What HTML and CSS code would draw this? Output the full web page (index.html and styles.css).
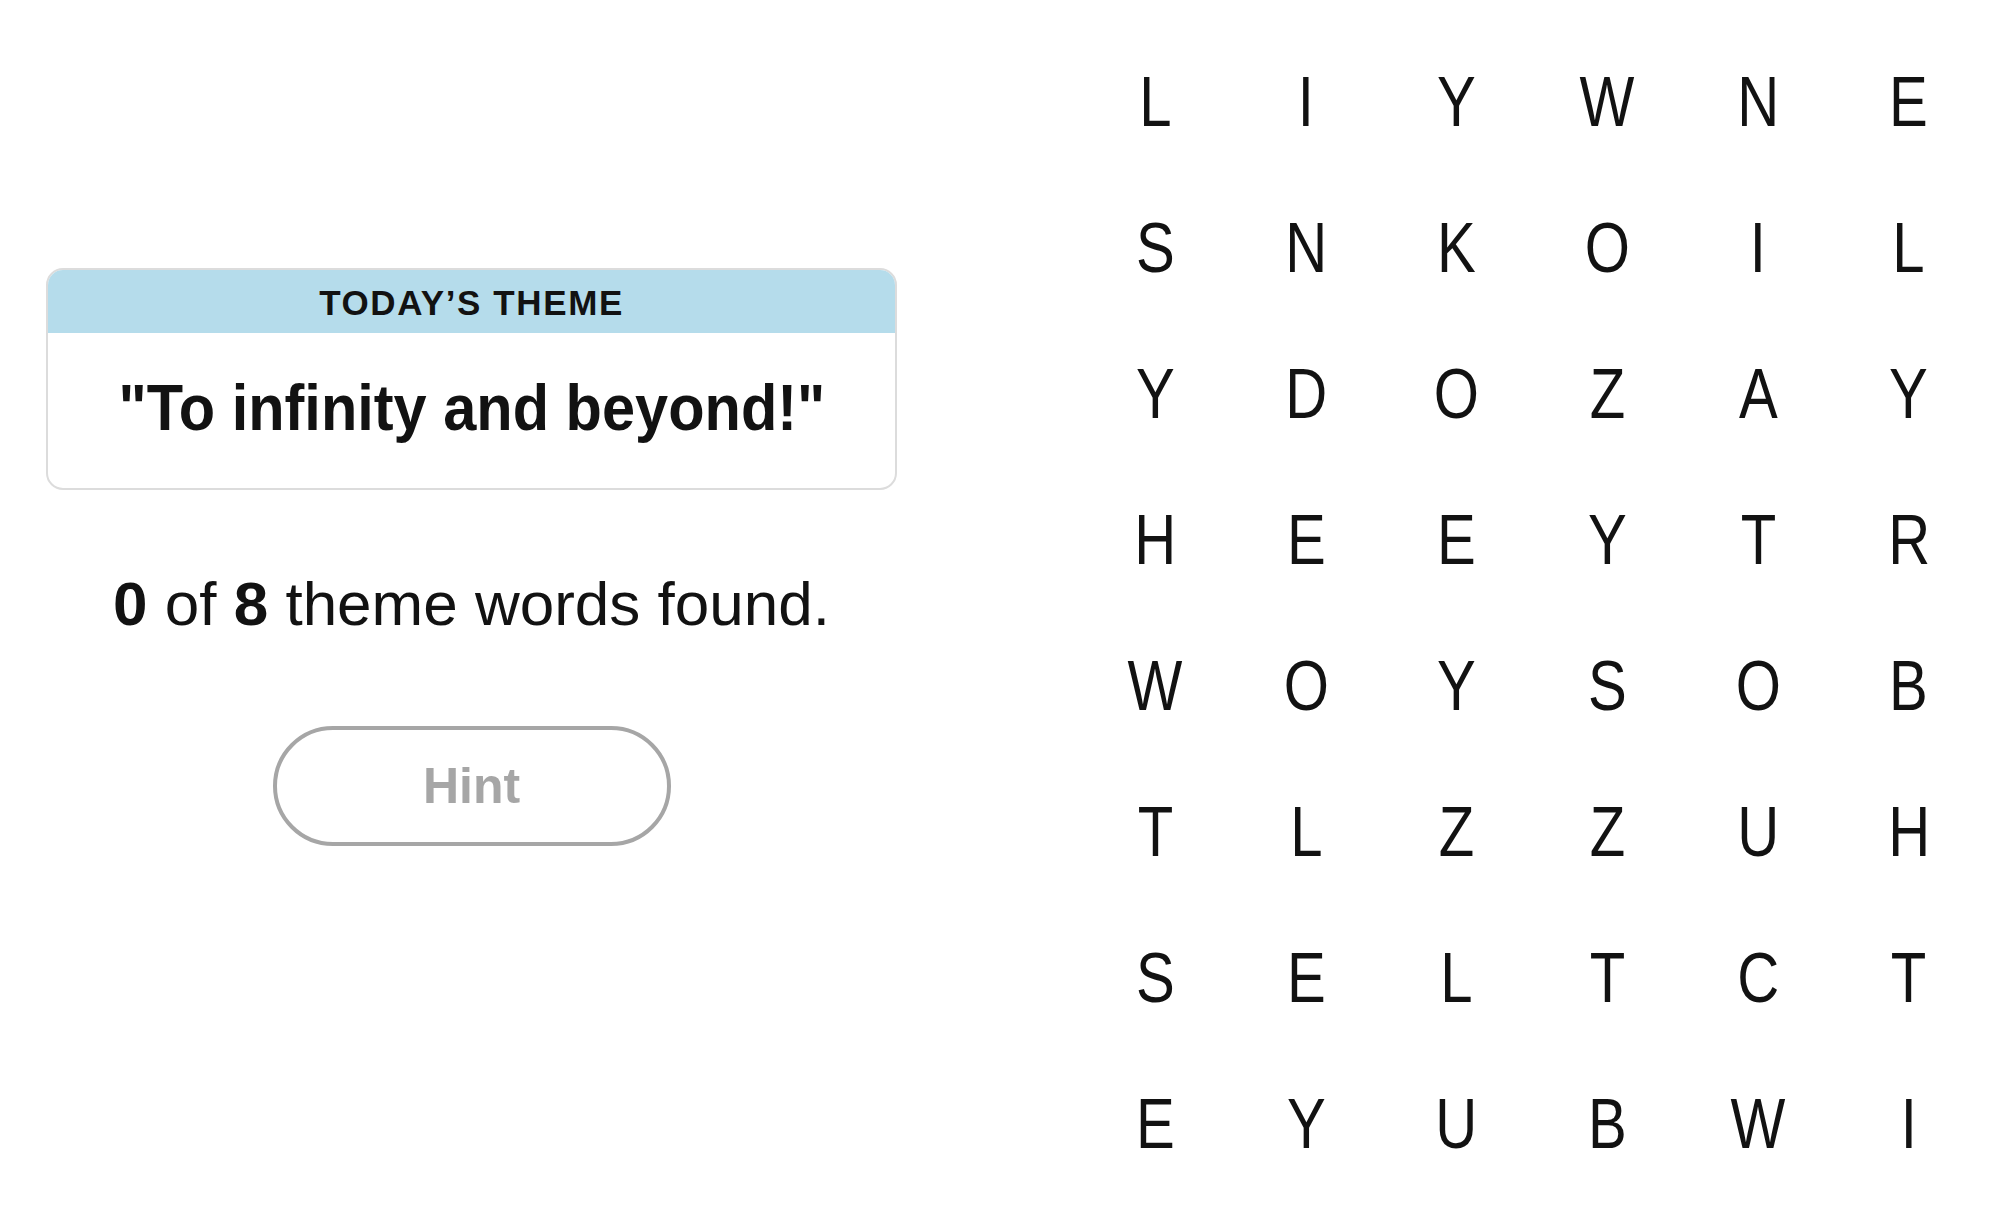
FILE: index.html
```html
<!DOCTYPE html>
<html lang="en">
<head>
    <meta charset="UTF-8">
    <title>Strands</title>
    <link rel="stylesheet" href="styles.css">
</head>
<body>
    <main class="game">
        <section class="sidebar">
            <div class="theme-card">
                <h2 class="theme-label">TODAY’S THEME</h2>
                <p class="theme-clue"><span>"To infinity and beyond!"</span></p>
            </div>

            <p class="progress"><b>0</b> of <b>8</b> theme words found.</p>

            <button class="hint-button" disabled>Hint</button>
        </section>

        <section class="board" id="board"></section>
    </main>

    <script>
        // Letras do tabuleiro, linha por linha
        const rows = [
            'LIYWNE',
            'SNKOIL',
            'YDOZAY',
            'HEEYTR',
            'WOYSOB',
            'TLZZUH',
            'SELTCT',
            'EYUBWI'
        ];

        const board = document.getElementById('board');
        rows.forEach(row => {
            row.split('').forEach(letter => {
                const cell = document.createElement('button');
                cell.className = 'letter';
                const span = document.createElement('span');
                span.textContent = letter;
                cell.appendChild(span);
                board.appendChild(cell);
            });
        });
    </script>
</body>
</html>
```

FILE: styles.css
```css
body {
    font-family: "Liberation Sans", Arial, sans-serif;
    background: #fff;
    color: #121212;
    margin: 0;
}

.game {
    display: flex;
    align-items: flex-start;
    padding-top: 29px;
}

.sidebar {
    width: 943px;
    display: flex;
    flex-direction: column;
    align-items: center;
    padding-top: 239px;
}

.theme-card {
    width: 851px;
    box-sizing: border-box;
    border: 2px solid #dcdcdc;
    border-radius: 17px;
    overflow: hidden;
}

.theme-label {
    margin: 0;
    height: 63px;
    line-height: 66px;
    background: #b5dceb;
    text-align: center;
    font-size: 35px;
    font-weight: bold;
    letter-spacing: 1.6px;
}

.theme-clue {
    margin: 0;
    height: 155px;
    line-height: 150px;
    text-align: center;
    font-size: 64px;
    font-weight: bold;
}

.theme-clue span {
    display: inline-block;
    transform: scaleX(0.93);
}

.progress {
    margin: 78px 0 0;
    font-size: 62px;
    line-height: 72px;
}

.hint-button {
    margin-top: 86px;
    width: 398px;
    height: 120px;
    box-sizing: border-box;
    border: 4px solid #a6a6a6;
    border-radius: 60px;
    background: #fff;
    color: #a6a6a6;
    font-family: "Liberation Sans", Arial, sans-serif;
    font-size: 50px;
    font-weight: bold;
    padding: 0;
}

.board {
    margin-left: 137px;
    display: grid;
    grid-template-columns: repeat(6, 150.7px);
    grid-auto-rows: 146px;
}

.letter {
    border: none;
    background: none;
    padding: 0;
    color: #121212;
    font-family: "Liberation Sans", Arial, sans-serif;
    font-size: 70px;
    line-height: 146px;
    text-align: center;
}

.letter span {
    display: inline-block;
    transform: scaleX(0.83);
}
```
